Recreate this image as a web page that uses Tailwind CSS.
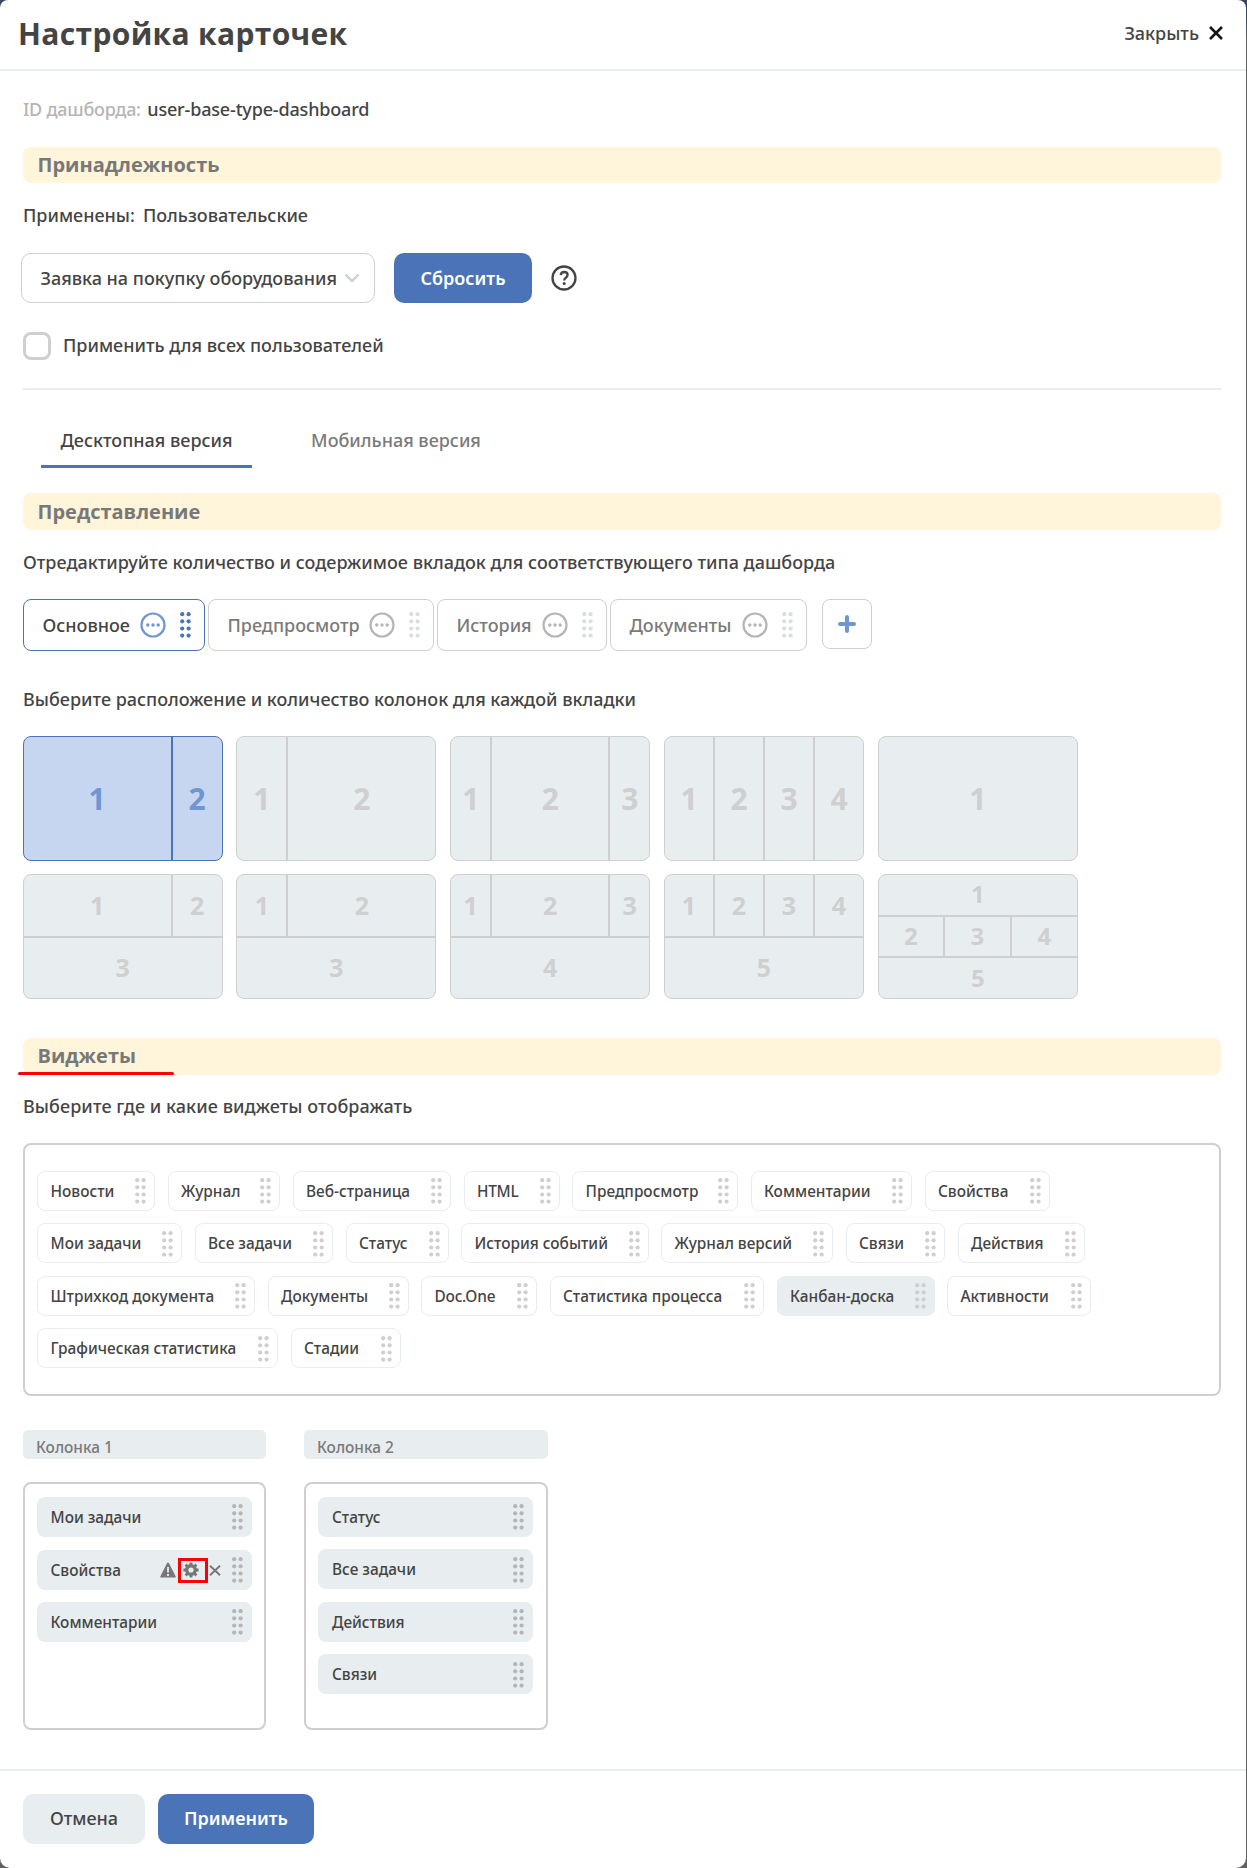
<!DOCTYPE html>
<html lang="ru">
<head>
<meta charset="utf-8">
<title>Настройка карточек</title>
<script src="https://cdn.jsdelivr.net/npm/@tailwindcss/browser@4"></script>
</head>
<body class="bg-[#5f6163]">
<svg class="hidden">
  <symbol id="grip" viewBox="0 0 11 26"><g fill="currentColor"><circle cx="2.2" cy="2.2" r="2.1"/><circle cx="8.6" cy="2.2" r="2.1"/><circle cx="2.2" cy="9.3" r="2.1"/><circle cx="8.6" cy="9.3" r="2.1"/><circle cx="2.2" cy="16.5" r="2.1"/><circle cx="8.6" cy="16.5" r="2.1"/><circle cx="2.2" cy="23.6" r="2.1"/><circle cx="8.6" cy="23.6" r="2.1"/></g></symbol>
  <symbol id="more" viewBox="0 0 26 26"><circle cx="13" cy="13" r="11.500" fill="none" stroke="currentColor" stroke-width="2.2"/><g fill="currentColor"><circle cx="7.8" cy="13" r="1.700"/><circle cx="13" cy="13" r="1.700"/><circle cx="18.2" cy="13" r="1.700"/></g></symbol>
</svg>
<div class="h-[1868px] w-[1247px] bg-linear-to-b from-[#3a4560] from-[12px] to-[#5f6163] to-[40px] pr-px">
<div class="flex h-[1868px] w-[1246px] flex-col overflow-hidden rounded-t-[8px] rounded-b-[10px] bg-white font-['Noto_Sans','Open_Sans',sans-serif] text-[18px] leading-6 font-medium text-[#444]">

  <header class="flex h-[71px] shrink-0 items-center justify-between border-b-2 border-[#e8edef] pr-[23px] pb-[2px] pl-[18px] whitespace-nowrap">
    <h1 class="font-['Open_Sans',sans-serif] text-[30px] leading-[36px] font-bold tracking-[0.33px]">Настройка карточек</h1>
    <button class="flex items-center gap-[10px] pb-px font-medium">Закрыть
      <svg class="size-[14px] text-[#151515]" viewBox="0 0 14 14" fill="none" stroke="currentColor" stroke-width="2.600"><path d="M1 1l12 12M13 1L1 13"/></svg>
    </button>
  </header>

  <main class="flex w-full flex-col pr-[25px] pl-[23px] whitespace-nowrap">
    <p class="mt-[26px] flex gap-[6.5px]"><span class="tracking-[-0.25px] text-[#b5b5b5]">ID дашборда:</span><span class="tracking-[-0.17px]">user-base-type-dashboard</span></p>

    <h2 class="mt-[26px] flex h-[36px] items-center rounded-[8px] bg-[#fff5da] pl-[14.5px] font-['Open_Sans',sans-serif] text-[20px] font-bold text-[#787878]">Принадлежность</h2>

    <p class="mt-[20px] flex gap-[8px]"><span>Применены:</span><span>Пользовательские</span></p>

    <div class="mt-[26px] -ml-[2px] flex h-[50px] items-center">
      <div class="flex h-[50px] w-[354px] items-center justify-between rounded-[10px] border border-[#cfcfcf] pr-[14px] pb-px pl-[18.5px]">Заявка на покупку оборудования
        <svg class="h-[10px] w-[16px]" viewBox="0 0 16 10" fill="none" stroke="#cfcfcf" stroke-width="2.400"><path d="M1.500 1.500L8 8l6.500-6.500"/></svg>
      </div>
      <button class="ml-[19px] h-[50px] w-[138px] rounded-[10px] bg-[#4a74b7] font-semibold text-white">Сбросить</button>
      <svg class="ml-[19px] size-[26px]" viewBox="0 0 26 26" fill="none" stroke="#444"><circle cx="13" cy="13" r="11.500" stroke-width="2.300"/><path d="M9.700 10.200c.2-2 1.600-3.200 3.500-3.200 2 0 3.400 1.200 3.400 3 0 2.700-3.400 2.600-3.400 5.600" stroke-width="2.300"/><circle cx="13.200" cy="18.600" r="1.500" fill="#444" stroke="none"/></svg>
    </div>

    <label class="mt-[29px] flex h-[28px] items-center gap-[12px]"><span class="size-[28px] rounded-[8px] border-[3px] border-[#cfcfcf]"></span><span class="pb-[2px]">Применить для всех пользователей</span></label>

    <div class="mt-[28px] h-[2px] bg-[#e8edef]"></div>

    <nav class="mt-[38px] ml-[18px] flex h-[40px]">
      <div class="h-[40px] w-[211px] border-b-[3px] border-[#4a74b7] text-center">Десктопная версия</div>
      <div class="ml-[38px] h-[40px] w-[212px] text-center text-[#7a7a7a]">Мобильная версия</div>
    </nav>

    <h2 class="mt-[25px] flex h-[37px] items-center rounded-[8px] bg-[#fff5da] pl-[14.5px] font-['Open_Sans',sans-serif] text-[20px] font-bold text-[#787878]">Представление</h2>

    <p class="mt-[20px]">Отредактируйте количество и содержимое вкладок для соответствующего типа дашборда</p>

    <div class="mt-[25px] flex h-[52px] gap-[3px] text-[#7a7a7a]">
      <div class="flex w-[182px] items-center rounded-[8px] border border-[#4a74b7] pl-[18.5px] text-[#444]">Основное<svg class="mr-[14px] ml-auto size-[26px] text-[#6f96d3]"><use href="#more"/></svg><svg class="mr-[13px] h-[26px] w-[11px] text-[#4a74b7]"><use href="#grip"/></svg></div>
      <div class="flex w-[226px] items-center rounded-[8px] border border-[#cfcfcf] pl-[18.5px]">Предпросмотр<svg class="mr-[14px] ml-auto size-[26px] text-[#b5b5b5]"><use href="#more"/></svg><svg class="mr-[13px] h-[26px] w-[11px] text-[#d9dfe1]"><use href="#grip"/></svg></div>
      <div class="flex w-[170px] items-center rounded-[8px] border border-[#cfcfcf] pl-[18.5px]">История<svg class="mr-[14px] ml-auto size-[26px] text-[#b5b5b5]"><use href="#more"/></svg><svg class="mr-[13px] h-[26px] w-[11px] text-[#d9dfe1]"><use href="#grip"/></svg></div>
      <div class="flex w-[197px] items-center rounded-[8px] border border-[#cfcfcf] pl-[18.5px]">Документы<svg class="mr-[14px] ml-auto size-[26px] text-[#b5b5b5]"><use href="#more"/></svg><svg class="mr-[13px] h-[26px] w-[11px] text-[#d9dfe1]"><use href="#grip"/></svg></div>
      <button class="ml-[12px] flex h-[50px] w-[50px] items-center justify-center rounded-[8px] border border-[#cfcfcf]"><svg class="size-[18px]" viewBox="0 0 18 18" stroke="#6f96d3" stroke-width="4" stroke-linecap="round"><path d="M9 2v14M2 9h14"/></svg></button>
    </div>

    <p class="mt-[36px]">Выберите расположение и количество колонок для каждой вкладки</p>

    <div class="mt-[25px] -ml-[0.4px] grid grid-cols-[repeat(5,200px)] gap-x-[13.8px] gap-y-[13px] font-['Open_Sans',sans-serif] text-[24px] leading-none font-bold text-[#cfcfcf]">
      <div class="grid h-[125px] grid-cols-[149px_49px] divide-x-2 divide-[#4a74b7] rounded-[8px] border border-[#4a74b7] bg-[#c6d6f1] text-[30px] text-[#6f96d3] *:grid *:place-items-center"><span>1</span><span>2</span></div>
      <div class="grid h-[125px] grid-cols-[51px_147px] divide-x-2 divide-[#cfcfcf] rounded-[8px] border border-[#cfcfcf] bg-[#e8edef] text-[30px] *:grid *:place-items-center"><span>1</span><span>2</span></div>
      <div class="grid h-[125px] grid-cols-[41px_118px_39px] divide-x-2 divide-[#cfcfcf] rounded-[8px] border border-[#cfcfcf] bg-[#e8edef] text-[30px] *:grid *:place-items-center"><span>1</span><span>2</span><span>3</span></div>
      <div class="grid h-[125px] grid-cols-[50px_50px_50px_48px] divide-x-2 divide-[#cfcfcf] rounded-[8px] border border-[#cfcfcf] bg-[#e8edef] text-[30px] *:grid *:place-items-center"><span>1</span><span>2</span><span>3</span><span>4</span></div>
      <div class="grid h-[125px] place-items-center rounded-[8px] border border-[#cfcfcf] bg-[#e8edef] text-[30px]"><span>1</span></div>

      <div class="grid h-[125px] grid-rows-[63px_60px] rounded-[8px] border border-[#cfcfcf] bg-[#e8edef] text-[25px]">
        <div class="grid grid-cols-[149px_49px] divide-x-2 divide-[#cfcfcf] border-b-2 *:grid *:place-items-center"><span>1</span><span>2</span></div>
        <div class="grid place-items-center pb-px">3</div>
      </div>
      <div class="grid h-[125px] grid-rows-[63px_60px] rounded-[8px] border border-[#cfcfcf] bg-[#e8edef] text-[25px]">
        <div class="grid grid-cols-[51px_147px] divide-x-2 divide-[#cfcfcf] border-b-2 *:grid *:place-items-center"><span>1</span><span>2</span></div>
        <div class="grid place-items-center pb-px">3</div>
      </div>
      <div class="grid h-[125px] grid-rows-[63px_60px] rounded-[8px] border border-[#cfcfcf] bg-[#e8edef] text-[25px]">
        <div class="grid grid-cols-[41px_118px_39px] divide-x-2 divide-[#cfcfcf] border-b-2 *:grid *:place-items-center"><span>1</span><span>2</span><span>3</span></div>
        <div class="grid place-items-center pb-px">4</div>
      </div>
      <div class="grid h-[125px] grid-rows-[63px_60px] rounded-[8px] border border-[#cfcfcf] bg-[#e8edef] text-[25px]">
        <div class="grid grid-cols-[50px_50px_50px_48px] divide-x-2 divide-[#cfcfcf] border-b-2 *:grid *:place-items-center"><span>1</span><span>2</span><span>3</span><span>4</span></div>
        <div class="grid place-items-center pb-px">5</div>
      </div>
      <div class="grid h-[125px] grid-rows-[42px_41px_40px] rounded-[8px] border border-[#cfcfcf] bg-[#e8edef]">
        <div class="grid place-items-center border-b-2 pb-[2px]">1</div>
        <div class="grid grid-cols-[66px_67px_65px] divide-x-2 divide-[#cfcfcf] border-b-2 *:grid *:place-items-center *:pb-px"><span>2</span><span>3</span><span>4</span></div>
        <div class="grid place-items-center">5</div>
      </div>
    </div>

    <div class="relative mt-[39px]">
      <h2 class="flex h-[37px] items-center rounded-[8px] bg-[#fff5da] pb-px pl-[14.5px] font-['Open_Sans',sans-serif] text-[20px] font-bold text-[#787878]">Виджеты</h2>
      <span class="absolute top-[34px] -left-[5px] h-[3px] w-[156px] rounded-full bg-[#fb0007]"></span>
    </div>

    <p class="mt-[19px] tracking-[0.07px]">Выберите где и какие виджеты отображать</p>

    <section class="mt-[25px] flex h-[253px] flex-col gap-[12.400px] rounded-[8px] border-2 border-[#cfcfcf] pt-[26px] pl-[12px] text-[15.4px]">
      <div class="flex h-10 gap-[12.500px] *:flex *:items-center *:justify-between *:rounded-[8px] *:border *:border-[#e8edef] *:pt-[2px] *:pr-[8px] *:pl-[12.500px]">
        <div class="w-[118px]">Новости<svg class="-mt-[2px] h-[26px] w-[11px] text-[#cfcfcf]"><use href="#grip"/></svg></div>
        <div class="w-[112.5px]">Журнал<svg class="-mt-[2px] h-[26px] w-[11px] text-[#cfcfcf]"><use href="#grip"/></svg></div>
        <div class="w-[158.5px]">Веб-страница<svg class="-mt-[2px] h-[26px] w-[11px] text-[#cfcfcf]"><use href="#grip"/></svg></div>
        <div class="w-[96px]"><span class="tracking-[-0.3px]">HTML</span><svg class="-mt-[2px] h-[26px] w-[11px] text-[#cfcfcf]"><use href="#grip"/></svg></div>
        <div class="w-[166px]">Предпросмотр<svg class="-mt-[2px] h-[26px] w-[11px] text-[#cfcfcf]"><use href="#grip"/></svg></div>
        <div class="w-[161.5px]">Комментарии<svg class="-mt-[2px] h-[26px] w-[11px] text-[#cfcfcf]"><use href="#grip"/></svg></div>
        <div class="w-[125.5px]">Свойства<svg class="-mt-[2px] h-[26px] w-[11px] text-[#cfcfcf]"><use href="#grip"/></svg></div>
      </div>
      <div class="flex h-10 gap-[12.500px] *:flex *:items-center *:justify-between *:rounded-[8px] *:border *:border-[#e8edef] *:pt-px *:pr-[8px] *:pl-[12.500px]">
        <div class="w-[145px]">Мои задачи<svg class="h-[26px] w-[11px] text-[#cfcfcf]"><use href="#grip"/></svg></div>
        <div class="w-[138.5px]">Все задачи<svg class="h-[26px] w-[11px] text-[#cfcfcf]"><use href="#grip"/></svg></div>
        <div class="w-[103px]">Статус<svg class="h-[26px] w-[11px] text-[#cfcfcf]"><use href="#grip"/></svg></div>
        <div class="w-[187.5px]">История событий<svg class="h-[26px] w-[11px] text-[#cfcfcf]"><use href="#grip"/></svg></div>
        <div class="w-[172px]">Журнал версий<svg class="h-[26px] w-[11px] text-[#cfcfcf]"><use href="#grip"/></svg></div>
        <div class="w-[99.5px]">Связи<svg class="h-[26px] w-[11px] text-[#cfcfcf]"><use href="#grip"/></svg></div>
        <div class="w-[127px]">Действия<svg class="h-[26px] w-[11px] text-[#cfcfcf]"><use href="#grip"/></svg></div>
      </div>
      <div class="flex h-10 gap-[12.500px] *:flex *:items-center *:justify-between *:rounded-[8px] *:border *:border-[#e8edef] *:pt-[2px] *:pr-[8px] *:pl-[12.500px]">
        <div class="w-[218px]">Штрихкод документа<svg class="-mt-[2px] h-[26px] w-[11px] text-[#cfcfcf]"><use href="#grip"/></svg></div>
        <div class="w-[141px]">Документы<svg class="-mt-[2px] h-[26px] w-[11px] text-[#cfcfcf]"><use href="#grip"/></svg></div>
        <div class="w-[116px]"><span class="tracking-[-0.2px]">Doc.One</span><svg class="-mt-[2px] h-[26px] w-[11px] text-[#cfcfcf]"><use href="#grip"/></svg></div>
        <div class="w-[214.5px]">Статистика процесса<svg class="-mt-[2px] h-[26px] w-[11px] text-[#cfcfcf]"><use href="#grip"/></svg></div>
        <div class="w-[158px] bg-[#e8edef]">Канбан-доска<svg class="-mt-[2px] h-[26px] w-[11px] text-[#cfcfcf]"><use href="#grip"/></svg></div>
        <div class="w-[144px]">Активности<svg class="-mt-[2px] h-[26px] w-[11px] text-[#cfcfcf]"><use href="#grip"/></svg></div>
      </div>
      <div class="flex h-10 gap-[12.500px] *:flex *:items-center *:justify-between *:rounded-[8px] *:border *:border-[#e8edef] *:pt-px *:pr-[8px] *:pl-[12.500px]">
        <div class="w-[241px]">Графическая статистика<svg class="h-[26px] w-[11px] text-[#cfcfcf]"><use href="#grip"/></svg></div>
        <div class="w-[110px]">Стадии<svg class="h-[26px] w-[11px] text-[#cfcfcf]"><use href="#grip"/></svg></div>
      </div>
    </section>

    <div class="mt-[34px] flex gap-[38px] text-[15.4px]">
      <div class="w-[243px]">
        <div class="h-[29px] rounded-[5px] bg-[#e8edef] pt-[6px] pl-[13px] text-[#7a7a7a]">Колонка 1</div>
        <div class="mt-[23px] flex h-[248px] flex-col gap-[12.600px] rounded-[8px] border-2 border-[#cfcfcf] px-[12px] pt-[13px] *:flex *:h-10 *:items-center *:rounded-[8px] *:bg-[#e8edef] *:pt-[2px] *:pr-[9px] *:pl-[13.500px]">
          <div>Мои задачи<svg class="-mt-[2px] ml-auto h-[26px] w-[11px] text-[#b5b5b5]"><use href="#grip"/></svg></div>
          <div>Свойства
            <svg class="-mt-px ml-auto h-[16px] w-[16px]" viewBox="0 0 16 16"><path d="M8 .5c.5 0 .8.300 1 .7l6.600 13c.4.8 0 1.400-.8 1.400H1.200c-.8 0-1.200-.6-.8-1.400L7 1.200c.2-.4.5-.7 1-.7z" fill="#777"/><path d="M8 5v5.500M8 12v2" stroke="#e8edef" stroke-width="1.800"/></svg>
            <span class="-mt-px ml-[2.5px] grid h-[25px] w-[30px] place-items-center border-[3px] border-[#fb0007] pr-[4px]"><svg class="size-[16px] shrink-0" viewBox="0 0 16 16" fill="none" stroke="#777"><circle cx="8" cy="8" r="4.300" stroke-width="3.400"/><path d="M8 .4v2.500M8 13.100v2.500M.4 8h2.500M13.100 8h2.500M2.600 2.600l1.800 1.800M11.600 11.600l1.800 1.800M2.600 13.400l1.800-1.800M11.600 4.400l1.800-1.800" stroke-width="2.800"/></svg></span>
            <svg class="-mt-px mr-[11px] ml-px h-[11px] w-[12px]" viewBox="0 0 12 11" stroke="#777" stroke-width="1.900"><path d="M1 .7l10 9.600M11 .7L1 10.300"/></svg>
            <svg class="-mt-px h-[26px] w-[11px] text-[#b5b5b5]"><use href="#grip"/></svg>
          </div>
          <div>Комментарии<svg class="-mt-[2px] ml-auto h-[26px] w-[11px] text-[#b5b5b5]"><use href="#grip"/></svg></div>
        </div>
      </div>
      <div class="w-[244px]">
        <div class="h-[29px] rounded-[5px] bg-[#e8edef] pt-[6px] pl-[13px] text-[#7a7a7a]">Колонка 2</div>
        <div class="mt-[23px] flex h-[248px] flex-col gap-[12.400px] rounded-[8px] border-2 border-[#cfcfcf] px-[12px] pt-[13px] pr-[13px] *:flex *:h-10 *:items-center *:rounded-[8px] *:bg-[#e8edef] *:pt-[2px] *:pr-[9px] *:pl-[14px]">
          <div>Статус<svg class="-mt-[2px] ml-auto h-[26px] w-[11px] text-[#b5b5b5]"><use href="#grip"/></svg></div>
          <div>Все задачи<svg class="-mt-px ml-auto h-[26px] w-[11px] text-[#b5b5b5]"><use href="#grip"/></svg></div>
          <div>Действия<svg class="-mt-[2px] ml-auto h-[26px] w-[11px] text-[#b5b5b5]"><use href="#grip"/></svg></div>
          <div>Связи<svg class="-mt-px ml-auto h-[26px] w-[11px] text-[#b5b5b5]"><use href="#grip"/></svg></div>
        </div>
      </div>
    </div>
  </main>

  <footer class="mt-[39px] flex shrink-0 gap-[13px] border-t-2 border-[#e8edef] pt-[23px] pl-[23px]">
    <button class="h-[50px] w-[122px] rounded-[10px] bg-[#e8edef] pb-[2px] font-medium">Отмена</button>
    <button class="h-[50px] w-[156px] rounded-[10px] bg-[#4a74b7] pb-[2px] font-semibold text-white">Применить</button>
  </footer>
</div>
</div>
</body>
</html>
